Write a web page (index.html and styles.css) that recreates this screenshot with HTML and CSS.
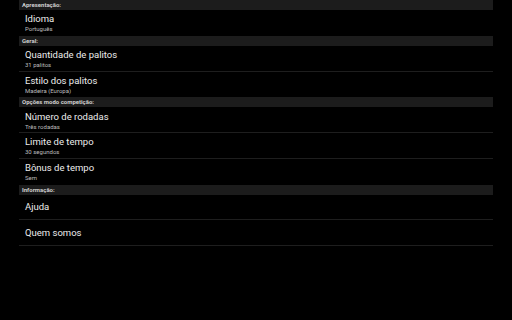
FILE: index.html
```html
<!DOCTYPE html>
<html lang="pt">
<head>
<meta charset="utf-8">
<link rel="stylesheet" href="styles.css">
</head>
<body>
<div class="prefs">
  <div class="cat">Apresentação:</div>
  <div class="item last"><div class="title">Idioma</div><div class="sum">Português</div></div>
  <div class="cat">Geral:</div>
  <div class="item"><div class="title">Quantidade de palitos</div><div class="sum">31 palitos</div></div>
  <div class="item last"><div class="title">Estilo dos palitos</div><div class="sum">Madeira (Europa)</div></div>
  <div class="cat">Opções modo competição:</div>
  <div class="item"><div class="title">Número de rodadas</div><div class="sum">Três rodadas</div></div>
  <div class="item"><div class="title">Limite de tempo</div><div class="sum">30 segundos</div></div>
  <div class="item last"><div class="title">Bônus de tempo</div><div class="sum">Sem</div></div>
  <div class="cat">Informação:</div>
  <div class="item"><div class="title">Ajuda</div></div>
  <div class="item"><div class="title">Quem somos</div></div>
</div>
</body>
</html>
```
FILE: styles.css
```css
html, body {
  margin: 0;
  padding: 0;
  background: #000;
  width: 512px;
  height: 320px;
  overflow: hidden;
}
body {
  font-family: Roboto, "Noto Sans", sans-serif;
}
.prefs {
  margin-left: 19px;
  width: 474px;
  display: flex;
  flex-direction: column;
}
.cat {
  height: 10px;
  box-sizing: border-box;
  background: #1c1c1c;
  color: #cfcfcf;
  font-size: 6px;
  font-weight: 700;
  line-height: 10px;
  padding-left: 3px;
}
.item {
  height: 25.75px;
  box-sizing: border-box;
  border-bottom: 1px solid #1e1e1e;
  padding: 1px 0 0 6px;
  display: flex;
  flex-direction: column;
  justify-content: center;
}
.item.last {
  border-bottom-color: #000;
}
.title {
  color: #ececec;
  font-size: 9.5px;
  line-height: 12px;
}
.sum {
  color: #bdbdbd;
  font-size: 6px;
  line-height: 7px;
}
```
